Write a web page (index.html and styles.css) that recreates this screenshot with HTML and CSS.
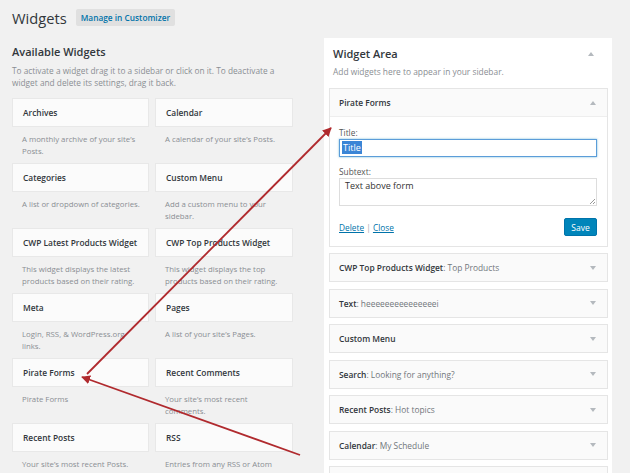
FILE: index.html
```html
<!DOCTYPE html>
<html lang="en">
	<head>
		<meta name="viewport" content="width=device-width, initial-scale=1">
		<link rel="stylesheet" href="styles.css">
	</head>

	<body>
		<div id="header">
			<h1>Widgets</h1>
			<a class="page-btn" href="">Manage in Customizer</a>
		</div>

		<div id="main">
			<div id="available">
				<h2>Available Widgets</h2>
				<p class="intro">To activate a widget drag it to a sidebar or click on it. To deactivate a widget and delete its settings, drag it back.</p>
				<div id="widget-list">
					<div class="item"><div class="card">Archives</div><div class="desc">A monthly archive of your site’s Posts.</div></div>
					<div class="item"><div class="card">Calendar</div><div class="desc">A calendar of your site’s Posts.</div></div>
					<div class="item"><div class="card">Categories</div><div class="desc">A list or dropdown of categories.</div></div>
					<div class="item"><div class="card">Custom Menu</div><div class="desc">Add a custom menu to your sidebar.</div></div>
					<div class="item"><div class="card">CWP Latest Products Widget</div><div class="desc">This widget displays the latest products based on their rating.</div></div>
					<div class="item"><div class="card">CWP Top Products Widget</div><div class="desc">This widget displays the top products based on their rating.</div></div>
					<div class="item"><div class="card">Meta</div><div class="desc">Login, RSS, &amp; WordPress.org links.</div></div>
					<div class="item"><div class="card">Pages</div><div class="desc">A list of your site’s Pages.</div></div>
					<div class="item"><div class="card">Pirate Forms</div><div class="desc">Pirate Forms</div></div>
					<div class="item"><div class="card">Recent Comments</div><div class="desc">Your site’s most recent comments.</div></div>
					<div class="item"><div class="card">Recent Posts</div><div class="desc">Your site’s most recent Posts.</div></div>
					<div class="item"><div class="card">RSS</div><div class="desc">Entries from any RSS or Atom feed.</div></div>
				</div>
			</div>

			<div id="sidebar-area">
				<div class="area-head">
					<h2>Widget Area</h2>
					<span class="arrow up"></span>
				</div>
				<p class="area-desc">Add widgets here to appear in your sidebar.</p>

				<div class="widget open">
					<div class="widget-top">
						<span class="widget-title">Pirate Forms</span>
						<span class="arrow up"></span>
					</div>
					<div class="widget-inside">
						<label>Title:</label>
						<div class="input focus"><span class="sel">Title</span></div>
						<label>Subtext:</label>
						<div class="textarea">Text above form<span class="grip"></span></div>
						<div class="controls">
							<span><a href="">Delete</a> | <a href="">Close</a></span>
							<button class="save">Save</button>
						</div>
					</div>
				</div>

				<div class="widget"><div class="widget-top"><span class="widget-title">CWP Top Products Widget<span class="in-title">: Top Products</span></span><span class="arrow"></span></div></div>
				<div class="widget"><div class="widget-top"><span class="widget-title">Text<span class="in-title">: heeeeeeeeeeeeeeei</span></span><span class="arrow"></span></div></div>
				<div class="widget"><div class="widget-top"><span class="widget-title">Custom Menu</span><span class="arrow"></span></div></div>
				<div class="widget"><div class="widget-top"><span class="widget-title">Search<span class="in-title">: Looking for anything?</span></span><span class="arrow"></span></div></div>
				<div class="widget"><div class="widget-top"><span class="widget-title">Recent Posts<span class="in-title">: Hot topics</span></span><span class="arrow"></span></div></div>
				<div class="widget"><div class="widget-top"><span class="widget-title">Calendar<span class="in-title">: My Schedule</span></span><span class="arrow"></span></div></div>
				<div class="widget"><div class="widget-top"><span class="widget-title">Meta</span><span class="arrow"></span></div></div>
			</div>
		</div>

		<!-- annotation arrows drawn over the screenshot -->
		<svg id="annot" width="630" height="473" viewBox="0 0 630 473">
			<defs>
				<marker id="head" viewBox="0 0 10 10" refX="9" refY="5" markerWidth="5" markerHeight="5" orient="auto">
					<path d="M0 0 L10 5 L0 10 Z" fill="#b02a2e"/>
				</marker>
			</defs>
			<line x1="87" y1="374" x2="331" y2="128" stroke="#b02a2e" stroke-width="1.8" marker-end="url(#head)"/>
			<line x1="300" y1="455" x2="82" y2="377" stroke="#b02a2e" stroke-width="1.8" marker-end="url(#head)"/>
		</svg>
	</body>
</html>
```

FILE: styles.css
```css
* {
	box-sizing: border-box;
}
html {
	height: 100%;
	font-family: "Open Sans", sans-serif;
	background: #f1f1f1;
	color: #32373c;
}
body {
	margin: 0;
	height: 100%;
	overflow: hidden;
	position: relative;
}
#header {
	display: flex;
	align-items: center;
	gap: 9px;
	padding: 0 12px;
	height: 35px;
}
#header h1 {
	margin: 0;
	font-size: 14.7px;
	font-weight: 400;
	line-height: 20px;
}
.page-btn {
	background: #e0e0e0;
	color: #0073aa;
	font-size: 8.3px;
	font-weight: 600;
	text-decoration: none;
	padding: 0 5px;
	border-radius: 2px;
	line-height: 17px;
	height: 17px;
}
#main {
	display: grid;
	grid-template-columns: 281px 288px;
	gap: 31px;
	padding-left: 12px;
}
#available h2 {
	margin: 9px 0 0;
	font-size: 11px;
	font-weight: 600;
	line-height: 16px;
}
.intro {
	margin: 5px 0 9px;
	font-size: 8.3px;
	line-height: 12px;
	color: #8a8e93;
}
#widget-list {
	display: grid;
	grid-template-columns: 137px 138px;
	column-gap: 6px;
	row-gap: 6px;
}
.item {
	height: 59px;
}
.card {
	height: 29px;
	background: #fbfbfb;
	border: 1px solid #e8e8e8;
	padding: 0 10px;
	font-size: 8.4px;
	font-weight: 600;
	line-height: 27px;
	white-space: nowrap;
}
.desc {
	padding: 6px 9px 0 10px;
	font-size: 7.8px;
	line-height: 12px;
	color: #8a8e93;
}
#sidebar-area {
	margin-top: 3px;
	background: #fff;
	padding: 0 4px 0 5px;
	height: 460px;
}
.area-head {
	display: flex;
	justify-content: space-between;
	align-items: center;
	padding: 8px 14px 0 4px;
}
.area-head h2 {
	margin: 0;
	font-size: 11px;
	font-weight: 600;
	line-height: 16px;
}
.area-desc {
	margin: 4px 0 10px 4px;
	font-size: 8.4px;
	line-height: 12px;
	color: #8a8e93;
}
.widget {
	border: 1px solid #e5e5e5;
	margin-bottom: 6.5px;
	background: #fafafa;
}
.widget-top {
	height: 27px;
	display: flex;
	justify-content: space-between;
	align-items: center;
	padding: 0 11px 0 9px;
	font-size: 8.4px;
	font-weight: 600;
}
.in-title {
	font-weight: 400;
	color: #72777c;
}
.arrow {
	width: 0;
	height: 0;
	border-left: 3px solid transparent;
	border-right: 3px solid transparent;
	border-top: 4px solid #b4b9be;
}
.arrow.up {
	border-top: 0;
	border-bottom: 4px solid #b4b9be;
}
.widget.open {
	margin-bottom: 6px;
}
.widget.open .widget-top {
	height: 28px;
	border-bottom: 1px solid #eee;
}
.widget-inside {
	background: #fff;
	padding: 10px 10px 10px 9px;
}
.widget-inside label {
	display: block;
	font-size: 8.3px;
	line-height: 12px;
	color: #555;
}
.input {
	height: 18px;
	border: 1px solid #5b9dd9;
	box-shadow: 0 0 2px rgba(30, 140, 190, 0.6);
	padding: 1px 2px;
	font-size: 9px;
	line-height: 14px;
	margin-bottom: 9px;
}
.sel {
	background: #3a85d6;
	color: #fff;
	padding: 0 1px;
}
.textarea {
	position: relative;
	height: 28px;
	border: 1px solid #ddd;
	padding: 0 5px;
	font-size: 9px;
	line-height: 14px;
	color: #333;
}
.grip {
	position: absolute;
	right: 1px;
	bottom: 1px;
	width: 5px;
	height: 5px;
	background: linear-gradient(135deg, transparent 45%, #999 45%, #999 55%, transparent 55%, transparent 75%, #999 75%, #999 85%, transparent 85%);
}
.controls {
	display: flex;
	justify-content: space-between;
	align-items: center;
	margin-top: 12px;
	font-size: 8.3px;
	color: #aaa;
}
.controls a {
	color: #0073aa;
}
.save {
	background: #0085ba;
	border: 1px solid #0073aa;
	border-radius: 2px;
	color: #fff;
	font-family: "Open Sans", sans-serif;
	font-size: 8.5px;
	height: 18px;
	width: 33px;
	padding: 0;
}
#annot {
	position: absolute;
	left: 0;
	top: 0;
	pointer-events: none;
}
```
